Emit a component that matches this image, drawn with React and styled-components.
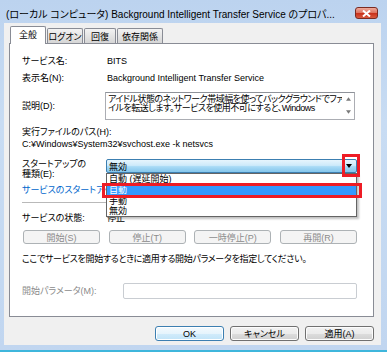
import React from 'react';
import styled, { createGlobalStyle } from 'styled-components';

const GlobalStyle = createGlobalStyle`
  html, body { margin:0; padding:0; background:#fff; }
  body {
    font-family: "Liberation Sans", "Noto Sans CJK JP", sans-serif;
    font-size: 9px;
    font-feature-settings: "palt";
    color: #000;
  }
`

const Window = styled.div`
  width: 387px;
  height: 352px;
  box-sizing: border-box;
  display: flex;
  flex-direction: column;
  padding: 0 6px 5px 4px;
  background: linear-gradient(180deg, #bcd3ef 0%, #c8dcf3 35%, #c1d6f0 100%);
  border-bottom: 2px solid #3fb6dc;
  overflow: hidden;
`

const TitleBar = styled.div`
  height: 23px;
  box-sizing: border-box;
  display: flex;
  align-items: center;
  padding: 3px 0 0 2px;
`

const Title = styled.div`
  flex: 1;
  font-size: 10px;
  white-space: nowrap;
  overflow: hidden;
`

const CloseButton = styled.div`
  width: 23px;
  height: 12px;
  margin-right: 3px;
  box-sizing: border-box;
  border: 1px solid #7a2b22;
  border-radius: 3px;
  background: linear-gradient(180deg, #eeaa9c 0%, #de7663 45%, #c9321c 55%, #d85a40 100%);
  display: flex;
  align-items: center;
  justify-content: center;
`

const Client = styled.div`
  flex: 1;
  display: flex;
  flex-direction: column;
  background: #f0f0f0;
  padding: 3px 7px 0 5px;
`

const TabStrip = styled.div`
  height: 17px;
  display: flex;
  align-items: flex-end;
  padding-left: 1px;
  position: relative;
  z-index: 2;
`

const Tab = styled.div`
  width: ${p => p.$w}px;
  height: ${p => (p.$active ? 18 : 15)}px;
  margin-bottom: ${p => (p.$active ? -1 : 0)}px;
  margin-left: ${p => (p.$first ? 0 : 1)}px;
  box-sizing: border-box;
  border: 1px solid #898c95;
  border-bottom: none;
  border-radius: 2px 2px 0 0;
  background: ${p => (p.$active ? '#fff' : 'linear-gradient(180deg, #f3f3f3 0%, #e4e4e4 50%, #d6d6d6 100%)')};
  display: flex;
  align-items: center;
  justify-content: center;
  padding-bottom: ${p => (p.$active ? 2 : 0)}px;
  white-space: nowrap;
`

const Panel = styled.div`
  flex: 1;
  position: relative;
  display: flex;
  flex-direction: column;
  background: #fff;
  border: 1px solid #898c95;
  padding: 10px 16px 0 12px;
`

const Row = styled.div`
  display: flex;
  align-items: ${p => p.$align || 'center'};
  height: ${p => (p.$h ? `${p.$h}px` : 'auto')};
  margin-top: ${p => p.$mt || 0}px;
  white-space: nowrap;
`

const Label = styled.div`
  width: ${p => p.$w || 85}px;
  flex: none;
  line-height: 10px;
  color: ${p => (p.$disabled ? '#8b8b8b' : '#000')};
`

const Text = styled.div`
  line-height: 13px;
  letter-spacing: ${p => (p.$tight ? '-0.3px' : 'normal')};
`

const DescBox = styled.div`
  width: 250px;
  height: 28px;
  margin-left: -2px;
  box-sizing: border-box;
  border: 1px solid #abadb3;
  border-top-color: #8e9299;
  display: flex;
  overflow: hidden;
`

const DescText = styled.div`
  flex: 1;
  padding: 2px 0 0 2px;
  line-height: 9px;
  letter-spacing: -0.5px;
  overflow: hidden;
`

const ScrollCol = styled.div`
  width: 12px;
  display: flex;
  flex-direction: column;
  justify-content: space-between;
  align-items: center;
  padding: 4px 0 5px;
`

const ComboWrap = styled.div`
  position: relative;
  width: 251px;
  margin-left: -1px;
`

const Combo = styled.div`
  height: 14px;
  box-sizing: border-box;
  border: 1px solid #3c7fb1;
  border-radius: 2px;
  background: linear-gradient(180deg, #e6f5fd 0%, #cdeafa 45%, #a9dbf6 55%, #84c6ec 100%);
  display: flex;
  align-items: center;
  padding: 0 4px 0 2px;
`

const ComboArrow = styled.div`
  margin-left: auto;
  display: flex;
  align-items: center;
`

const DropList = styled.div`
  position: absolute;
  top: 14px;
  left: 0;
  width: 100%;
  box-sizing: border-box;
  background: #fff;
  border: 1px solid #646464;
  box-shadow: 2px 2px 2px rgba(0, 0, 0, 0.25);
  z-index: 5;
`

const DropItem = styled.div`
  height: ${p => (p.$selected ? 12 : 10)}px;
  line-height: ${p => (p.$selected ? 12 : 10)}px;
  padding-left: 2px;
  background: ${p => (p.$selected ? '#3399ff' : 'transparent')};
  color: ${p => (p.$selected ? '#fff' : '#000')};
`

const RedBox = styled.div`
  position: absolute;
  left: ${p => p.$x}px;
  top: ${p => p.$y}px;
  width: ${p => p.$w}px;
  height: ${p => p.$h}px;
  box-sizing: border-box;
  border: 3px solid #ee1c25;
  z-index: 6;
`

const Link = styled.div`
  color: #0066cc;
  line-height: 12px;
`

const Separator = styled.div`
  height: 1px;
  margin-top: ${p => p.$mt}px;
  background: #b9b9b9;
`

const ButtonRow = styled.div`
  display: flex;
  justify-content: space-between;
  margin: ${p => p.$mt}px 0 0 1px;
`

const StateButton = styled.div`
  width: 77px;
  height: 14px;
  box-sizing: border-box;
  border: 1px solid #adb2b5;
  border-radius: 3px;
  background: #f4f4f4;
  color: #8b8b8b;
  display: flex;
  align-items: center;
  justify-content: center;
`

const ParamInput = styled.div`
  flex: 1;
  height: 16px;
  box-sizing: border-box;
  border: 1px solid #c9cdd2;
  border-radius: 2px;
  background: #fff;
`

const Footer = styled.div`
  display: flex;
  justify-content: flex-end;
  gap: 6px;
  padding: 9px 0 4px;
`

const DialogButton = styled.div`
  width: 69px;
  height: 15px;
  box-sizing: border-box;
  border: 1px solid ${p => (p.$default ? '#3c7fb1' : '#707070')};
  border-radius: 3px;
  background: ${p => (p.$default
    ? 'linear-gradient(180deg, #f4fafe 0%, #e6f4fc 50%, #d2ecfb 51%, #c0e3f8 100%)'
    : 'linear-gradient(180deg, #f2f2f2 0%, #ebebeb 50%, #dddddd 51%, #cfcfcf 100%)')};
  box-shadow: ${p => (p.$default ? 'inset 0 0 0 1px #ffffff' : 'inset 0 0 0 1px #fcfcfc')};
  display: flex;
  align-items: center;
  justify-content: center;
`

const Triangle = ({ up, color = '#000', size = 5 }) => (
  <svg width={size} height={Math.ceil(size / 2) + 1} viewBox="0 0 6 4">
    <polygon points={up ? '0,4 6,4 3,0' : '0,0 6,0 3,4'} fill={color} />
  </svg>
)

const App = () => {
  const tabs = [
    { label: '全般', w: 36, active: true },
    { label: 'ログオン', w: 36 },
    { label: '回復', w: 32 },
    { label: '依存関係', w: 46 },
  ]
  return (
    <>
      <GlobalStyle />
      <Window>
        <TitleBar>
          <Title>(ローカル コンピュータ) Background Intelligent Transfer Service のプロパ...</Title>
          <CloseButton>
            <svg width="9" height="7" viewBox="0 0 9 7">
              <path d="M1 0.5 L8 6.5 M8 0.5 L1 6.5" stroke="#fff" strokeWidth="2" />
            </svg>
          </CloseButton>
        </TitleBar>
        <Client>
          <TabStrip>
            {tabs.map((t, i) => (
              <Tab key={t.label} $w={t.w} $active={t.active} $first={i === 0}>{t.label}</Tab>
            ))}
          </TabStrip>
          <Panel>
            <Row $h={14}>
              <Label>サービス名:</Label>
              <Text>BITS</Text>
            </Row>
            <Row $h={14} $mt={3}>
              <Label>表示名(N):</Label>
              <Text>Background Intelligent Transfer Service</Text>
            </Row>
            <Row $mt={7}>
              <Label>説明(D):</Label>
              <DescBox>
                <DescText>
                  アイドル状態のネットワーク帯域幅を使ってバックグラウンドでファ<br />
                  イルを転送します。サービスを使用不可にすると、Windows
                </DescText>
                <ScrollCol>
                  <Triangle up color="#7a7a7a" size={5} />
                  <Triangle color="#7a7a7a" size={5} />
                </ScrollCol>
              </DescBox>
            </Row>
            <Row $h={13} $mt={5}>
              <Label $w={200}>実行ファイルのパス(H):</Label>
            </Row>
            <Row $h={13}>
              <Text>C:¥Windows¥System32¥svchost.exe -k netsvcs</Text>
            </Row>
            <Row $align="flex-start" $mt={8}>
              <Label>スタートアップの<br />種類(E):</Label>
              <ComboWrap>
                <Combo>
                  無効
                  <ComboArrow><Triangle size={6} /></ComboArrow>
                </Combo>
                <DropList>
                  <DropItem>自動 (遅延開始)</DropItem>
                  <DropItem $selected>自動</DropItem>
                  <DropItem>手動</DropItem>
                  <DropItem>無効</DropItem>
                </DropList>
                <RedBox $x={236} $y={-5} $w={18} $h={23} />
                <RedBox $x={-4} $y={24} $w={260} $h={15} />
              </ComboWrap>
            </Row>
            <Row $h={12} $mt={5}>
              <Link>サービスのスタートアップ オプションの構成についての詳細を表示します。</Link>
            </Row>
            <Separator $mt={6} />
            <Row $h={14} $mt={8}>
              <Label>サービスの状態:</Label>
              <Text>停止</Text>
            </Row>
            <ButtonRow $mt={5}>
              <StateButton>開始(S)</StateButton>
              <StateButton>停止(T)</StateButton>
              <StateButton>一時停止(P)</StateButton>
              <StateButton>再開(R)</StateButton>
            </ButtonRow>
            <Row $h={12} $mt={9}>
              <Text $tight>ここでサービスを開始するときに適用する開始パラメータを指定してください。</Text>
            </Row>
            <Row $mt={18}>
              <Label $w={101} $disabled>開始パラメータ(M):</Label>
              <ParamInput />
            </Row>
          </Panel>
          <Footer>
            <DialogButton $default>OK</DialogButton>
            <DialogButton>キャンセル</DialogButton>
            <DialogButton>適用(A)</DialogButton>
          </Footer>
        </Client>
      </Window>
    </>
  )
}

export default App
